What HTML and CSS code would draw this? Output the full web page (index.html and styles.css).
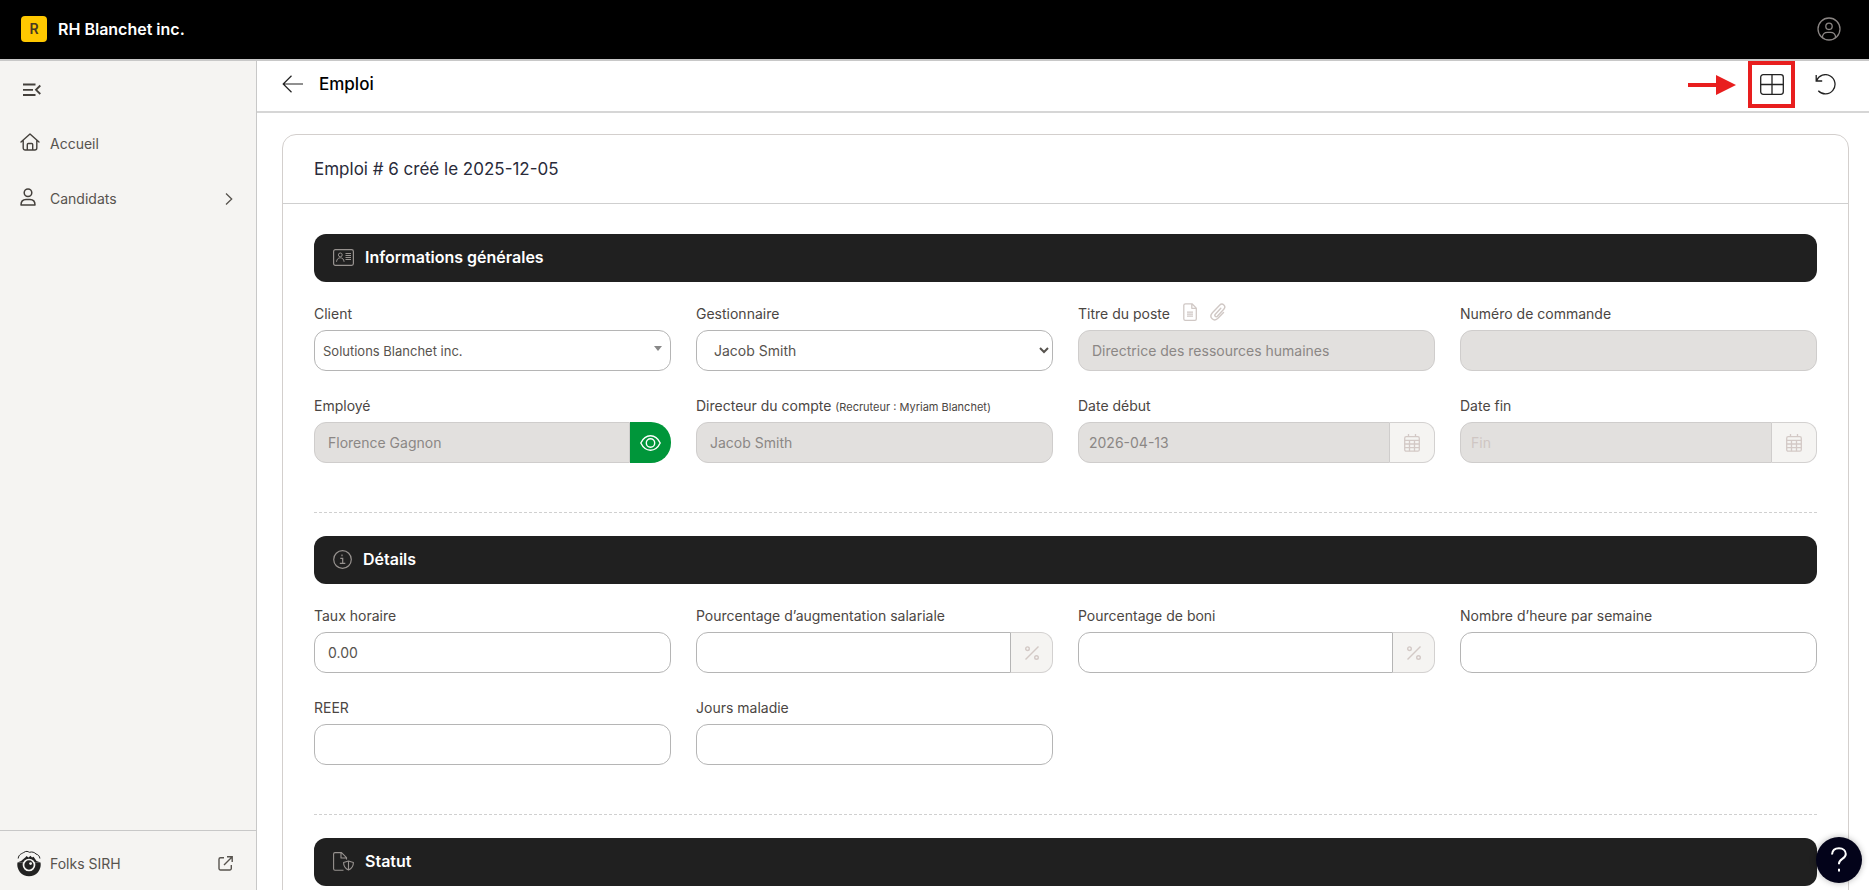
FILE: index.html
```html
<!DOCTYPE html>
<html lang="fr">
<head>
<meta charset="utf-8">
<meta name="viewport" content="width=device-width, initial-scale=1">
<title>RH Blanchet inc. – Emploi</title>
<link rel="stylesheet" href="styles.css">
</head>
<body>
<div class="app">
  <header class="topbar">
    <span class="brand-badge">R</span>
    <span class="brand-name">RH Blanchet inc.</span>
    <button class="icon-btn account" type="button" aria-label="Compte">
      <svg width="24" height="24" viewBox="0 0 24 24" fill="none" stroke="currentColor" stroke-width="1.3"><circle cx="12" cy="12" r="11"/><circle cx="12" cy="9.3" r="3.2"/><path d="M5.3 20.4c.3-3 2.500-5 5.200-5h3c2.700 0 4.900 2 5.200 5"/></svg>
    </button>
  </header>

  <nav class="sidebar">
    <button class="icon-btn collapse" type="button" aria-label="Réduire le menu">
      <svg width="18" height="14" viewBox="0 0 18 14" fill="none" stroke="currentColor" stroke-width="1.8"><path d="M0 1.500h12.500M0 6.800h10M0 12h12.500M17.300 2.500 13 6.800l4.300 4.200"/></svg>
    </button>
    <a class="nav-item" href="#">
      <svg class="nav-icon" width="20" height="18" viewBox="0 0 20 18" fill="none" stroke="currentColor" stroke-width="1.400" stroke-linecap="round" stroke-linejoin="round"><path d="M1 9 10 1l9 8M3.200 7.300V15a2 2 0 0 0 2 2h9.600a2 2 0 0 0 2-2V7.300M7.300 17v-5.500a1 1 0 0 1 1-1h3.400a1 1 0 0 1 1 1V17"/></svg>
      <span>Accueil</span>
    </a>
    <a class="nav-item" href="#">
      <svg class="nav-icon" width="16" height="18" viewBox="0 0 16 18" fill="none" stroke="currentColor" stroke-width="1.500" stroke-linejoin="round"><circle cx="8" cy="4.700" r="3.800"/><path d="M1 17.100c0-3.400 2-5.600 5-5.600h4c3 0 5 2.200 5 5.600z"/></svg>
      <span>Candidats</span>
      <svg class="nav-end" width="8" height="14" viewBox="0 0 8 14" fill="none" stroke="currentColor" stroke-width="1.300"><path d="m1 1.500 5.700 5.500L1 12.500"/></svg>
    </a>
    <a class="nav-foot" href="#">
      <svg class="folks" width="26" height="27" viewBox="0 0 26 27"><path d="M2.200 8.500C2.600 4 6.500 3.500 8 2.300c2.500-1.600 3.800-.8 5.500 0 2.500-.8 5 0 6.500 1.700 2.300.7 3.700 2.200 3.900 4.500" fill="none" stroke="#222"/><path d="M1.500 12.500 5 11l4.500-3.800L10.500 6l2 1.500L14.500 5.800l1.500 1.700 1.500-.8L20.500 11l4 1.500z" fill="#222"/><path d="M1.500 12.500a11.700 11.700 0 1 0 23 0z" fill="#222"/><circle cx="13" cy="15" r="5.500" fill="#222" stroke="#f5f4f2" stroke-width="1.700"/><circle cx="14.600" cy="13.600" r="1.400" fill="#f5f4f2"/></svg>
      <span>Folks SIRH</span>
      <svg class="nav-end" width="15" height="15" viewBox="0 0 15 15" fill="none" stroke="currentColor" stroke-width="1.400"><path d="M6 1.700H2.500A1.500 1.500 0 0 0 1 3.200v9.300A1.500 1.500 0 0 0 2.500 14h9.300a1.500 1.500 0 0 0 1.500-1.500V9M9 .8h5.200V6M14 1 6 9"/></svg>
    </a>
  </nav>

  <div class="page">
    <div class="toolbar">
      <button class="icon-btn" type="button" aria-label="Retour">
        <svg width="21" height="18" viewBox="0 0 21 18" fill="none" stroke="currentColor" stroke-width="1.200"><path d="M9.500.8 1.200 9l8.300 8.200M1.200 9H21"/></svg>
      </button>
      <h1 class="page-title">Emploi</h1>
      <div class="toolbar-actions">
        <button class="icon-btn highlighted" type="button" aria-label="Disposition">
          <svg width="24" height="21" viewBox="0 0 24 21" fill="none" stroke="currentColor" stroke-width="1.300"><rect x=".7" y=".7" width="22.600" height="19.600" rx="2.500"/><path d="M.7 10.500h22.600M12 .7v19.600"/></svg>
          <svg class="pointer" width="48" height="20" viewBox="0 0 48 20" fill="#e81e1e" aria-hidden="true"><path d="M0 8h28V0l20 10-20 10v-8H0z"/></svg>
        </button>
        <button class="icon-btn" type="button" aria-label="Annuler">
          <svg width="21" height="21" viewBox="0 0 21 21" fill="none" stroke="currentColor" stroke-width="1.300"><path d="M1.200 1v6h6M1.500 6.700A9.600 9.600 0 1 1 3.300 16.700"/></svg>
        </button>
      </div>
    </div>

    <main class="content">
      <form class="card">
        <h2 class="card-head">Emploi # 6 créé le 2025-12-05</h2>
        <div class="card-body">

          <section class="section">
            <h3 class="section-bar">
              <svg width="21" height="17" viewBox="0 0 21 17" fill="none" stroke="currentColor"><rect x=".6" y=".6" width="19.800" height="15.800" rx="1.800" stroke-width="1.200"/><circle cx="7.300" cy="5.900" r="1.900"/><path d="M3.500 12.800c.3-2.700 1.800-4 3.800-4s3.500 1.300 3.800 4M12.500 4.500h5.500M12.500 6.500h5.500M12.500 8.500h5.500M12.500 10.500h5.500"/></svg>
              Informations générales
            </h3>
            <div class="fields">
              <div class="field">
                <label for="client">Client</label>
                <div class="picker"><select id="client"><option>Solutions Blanchet inc.</option></select></div>
              </div>
              <div class="field">
                <label for="manager">Gestionnaire</label>
                <select class="control native" id="manager"><option>Jacob Smith</option></select>
              </div>
              <div class="field">
                <div class="label-row">
                  <label for="job">Titre du poste</label>
                  <svg width="14" height="18" viewBox="0 0 14 18" fill="none" stroke="currentColor" stroke-width="1.300" stroke-linejoin="round"><path d="M2.500.8H9l4.300 4.300V16a1.300 1.300 0 0 1-1.300 1.300H2.200A1.400 1.400 0 0 1 .8 16V2.200C.8 1.400 1.500.8 2.500.8zM8.800.8v4.500h4.500M4 9.200h6M4 11.200h6M4 13.200h6"/></svg>
                  <svg width="16" height="18" viewBox="0 0 16 18" fill="none" stroke="currentColor" stroke-width="1.400" stroke-linecap="round"><path d="M10.800 5.300 5.300 11.300c-1.300 1.500.6 3.300 2 1.900l6.500-7c2.800-3.100-1.300-7-4.200-4L2.400 9.800c-4.100 4.500 1.600 9.800 5.800 5.300l5.300-5.700"/></svg>
                </div>
                <input class="control" id="job" value="Directrice des ressources humaines" disabled>
              </div>
              <div class="field">
                <label for="order">Numéro de commande</label>
                <input class="control" id="order" disabled>
              </div>
              <div class="field">
                <label for="employee">Employé</label>
                <div class="group">
                  <input class="control" id="employee" value="Florence Gagnon" disabled>
                  <button class="view-btn" type="button" aria-label="Voir">
                    <svg width="21" height="16" viewBox="0 0 21 16" fill="none" stroke="currentColor" stroke-width="1.400"><path d="M.8 8C3 3.500 6.500.8 10.500.8S18 3.500 20.200 8c-2.200 4.500-5.700 7.200-9.700 7.200S3 12.500.8 8z"/><circle cx="10.500" cy="8" r="4.200"/></svg>
                  </button>
                </div>
              </div>
              <div class="field">
                <label for="director">Directeur du compte <small>(Recruteur : Myriam Blanchet)</small></label>
                <input class="control" id="director" value="Jacob Smith" disabled>
              </div>
              <div class="field">
                <label for="start">Date début</label>
                <div class="group date">
                  <input class="control" id="start" value="2026-04-13" disabled>
                  <span class="addon"><svg width="16" height="18" viewBox="0 0 16 18" fill="none" stroke="currentColor" stroke-width="1.300"><rect x=".7" y="2.700" width="14.600" height="14.500" rx="1.500"/><path d="M4.500 0v3M11.500 0v3M.7 6.300h14.600M.7 10h14.600M.7 13.600h14.600M5.500 6.300v11M10.500 6.300v11"/></svg></span>
                </div>
              </div>
              <div class="field">
                <label for="end">Date fin</label>
                <div class="group date">
                  <input class="control" id="end" placeholder="Fin" disabled>
                  <span class="addon"><svg width="16" height="18" viewBox="0 0 16 18" fill="none" stroke="currentColor" stroke-width="1.300"><rect x=".7" y="2.700" width="14.600" height="14.500" rx="1.500"/><path d="M4.500 0v3M11.500 0v3M.7 6.300h14.600M.7 10h14.600M.7 13.600h14.600M5.500 6.300v11M10.500 6.300v11"/></svg></span>
                </div>
              </div>
            </div>
          </section>

          <section class="section">
            <h3 class="section-bar">
              <svg width="19" height="19" viewBox="0 0 19 19" fill="none" stroke="currentColor" stroke-width="1.200"><circle cx="9.500" cy="9.500" r="8.800"/><path d="M7.300 8.300h2.400v5M6.800 13.300h5.500M9 4.500v1.800"/></svg>
              Détails
            </h3>
            <div class="fields">
              <div class="field">
                <label for="rate">Taux horaire</label>
                <input class="control" id="rate" value="0.00">
              </div>
              <div class="field">
                <label for="raise">Pourcentage d’augmentation salariale</label>
                <div class="group percent">
                  <input class="control" id="raise">
                  <span class="addon"><svg width="14" height="14" viewBox="0 0 14 14" fill="none" stroke="currentColor" stroke-width="1.400"><path d="M13.500.5.500 13.500"/><circle cx="2.500" cy="2.700" r="1.800"/><circle cx="11.500" cy="11.500" r="1.800"/></svg></span>
                </div>
              </div>
              <div class="field">
                <label for="bonus">Pourcentage de boni</label>
                <div class="group percent">
                  <input class="control" id="bonus">
                  <span class="addon"><svg width="14" height="14" viewBox="0 0 14 14" fill="none" stroke="currentColor" stroke-width="1.400"><path d="M13.500.5.500 13.500"/><circle cx="2.500" cy="2.700" r="1.800"/><circle cx="11.500" cy="11.500" r="1.800"/></svg></span>
                </div>
              </div>
              <div class="field">
                <label for="hours">Nombre d’heure par semaine</label>
                <input class="control" id="hours">
              </div>
              <div class="field">
                <label for="reer">REER</label>
                <input class="control" id="reer">
              </div>
              <div class="field">
                <label for="sick">Jours maladie</label>
                <input class="control" id="sick">
              </div>
            </div>
          </section>

          <section class="section">
            <h3 class="section-bar">
              <svg width="21" height="19" viewBox="0 0 21 19" fill="none" stroke="currentColor" stroke-width="1.100" stroke-linejoin="round"><path d="M10.500 18.300H2A1.500 1.500 0 0 1 .6 16.800V2.100A1.500 1.500 0 0 1 2 .6h6.500l5 5v2M8 .6v5.400h5.500M15.500 9l4.900 1.600c0 3.500-1.500 6-4.900 7.500-3.400-1.500-4.900-4-4.900-7.500zM15.500 9v9"/></svg>
              Statut
            </h3>
          </section>

        </div>
      </form>
    </main>
  </div>

  <button class="help" type="button" aria-label="Aide">
    <svg width="16" height="26" viewBox="0 0 16 26" fill="none" stroke="currentColor" stroke-width="2"><path d="M1 7.500C1.300 3.500 4 1.300 8 1.300c4.200 0 6.800 2.400 6.800 5.700 0 5-6.800 4.800-6.800 9.500v.8M8 21.800v2.700"/></svg>
  </button>
</div>
</body>
</html>
```
FILE: styles.css
```css
* {
  box-sizing: border-box;
}

body {
  margin: 0;
  font-family: Inter, "Liberation Sans", sans-serif;
  font-size: 14px;
  color: #4b4643;
  background: #fff;
}

h1, h2, h3 {
  margin: 0;
}

svg {
  display: block;
  flex: none;
}

.app {
  display: grid;
  grid-template-columns: 257px minmax(0, 1fr);
  grid-template-rows: 61px minmax(0, 1fr);
  height: 100vh;
  overflow: hidden;
}

.icon-btn {
  display: flex;
  align-items: center;
  justify-content: center;
  padding: 0;
  border: 0;
  background: none;
  color: #222;
}

/* Top bar */
.topbar {
  grid-column: 1 / -1;
  display: flex;
  align-items: center;
  padding: 0 28px 2px 21px;
  background: #000;
  border-bottom: 2px solid #c8c8c8;
}

.brand-badge {
  width: 26px;
  height: 26px;
  border-radius: 4px;
  background: #ffc800;
  color: #4a3a20;
  font-weight: 600;
  line-height: 26px;
  text-align: center;
}

.brand-name {
  margin-left: 11px;
  color: #fff;
  font-size: 16px;
  font-weight: 600;
}

.account {
  margin-left: auto;
  color: #8a8583;
}

/* Sidebar */
.sidebar {
  display: flex;
  flex-direction: column;
  background: #f5f4f2;
  border-right: 1px solid #c8c8c8;
}

.collapse {
  align-self: flex-start;
  margin: 22px 0 19px 23px;
  color: #44403c;
}

.nav-item,
.nav-foot {
  display: flex;
  align-items: center;
  padding: 0 23px 0 50px;
  color: #57534e;
  text-decoration: none;
}

.nav-item {
  position: relative;
  height: 55px;
}

.nav-icon,
.folks {
  position: absolute;
  left: 20px;
}

.nav-icon {
  top: 17px;
  color: #44403c;
}

.nav-end {
  margin-left: auto;
}

.nav-foot {
  position: relative;
  height: 60px;
  margin-top: auto;
  padding-top: 5px;
  border-top: 1px solid #c8c8c8;
}

.folks {
  left: 16px;
}

/* Page */
.page {
  display: flex;
  flex-direction: column;
  min-height: 0;
}

.toolbar {
  display: flex;
  flex: none;
  align-items: center;
  height: 52px;
  padding: 0 33px 4px 25px;
  border-bottom: 2px solid #d6d6d6;
}

.page-title {
  margin-left: 16px;
  color: #000;
  font-size: 17px;
  font-weight: 500;
}

.toolbar-actions {
  display: flex;
  align-items: center;
  gap: 20px;
  margin-left: auto;
}

.highlighted {
  position: relative;
  width: 47px;
  height: 47px;
  border: 4px solid #e81e1e;
}

.pointer {
  position: absolute;
  top: 10px;
  right: 55px;
}

.content {
  flex: 1;
  min-height: 0;
  padding: 21px 20px 24px 25px;
  overflow: hidden;
}

.card {
  border: 1px solid #d3cfcd;
  border-radius: 14px;
}

.card-head {
  padding: 22px 31px;
  border-bottom: 1px solid #cfcfcf;
  color: #292b3a;
  font-size: 17px;
  font-weight: 400;
  line-height: 24px;
}

.card-body {
  padding: 30px 31px;
}

.section + .section {
  margin-top: 49px;
  padding-top: 23px;
  border-top: 1px dashed #d0d0d0;
}

.section-bar {
  display: flex;
  align-items: center;
  gap: 11px;
  height: 48px;
  padding: 0 19px 2px;
  border-radius: 12px;
  background: #202020;
  color: #fff;
  font-size: 16px;
  font-weight: 600;
}

.section-bar svg {
  color: #97928f;
}

.fields {
  display: grid;
  grid-template-columns: repeat(4, minmax(0, 1fr));
  gap: 25px;
  margin-top: 22px;
}

.field label {
  display: block;
  height: 20px;
  line-height: 20px;
  white-space: nowrap;
}

.field label small {
  font-size: 11px;
}

.field > label,
.label-row {
  margin-bottom: 6px;
}

.label-row {
  display: flex;
  gap: 13px;
}

.label-row svg {
  margin-top: -1px;
  color: #d0c8c5;
}

.control,
.picker select {
  display: block;
  width: 100%;
  height: 41px;
  margin: 0;
  padding: 0 13px;
  border: 1px solid #b5b5b5;
  border-radius: 12px;
  background: #fff;
  color: #57534e;
  font: inherit;
}

.control:disabled {
  border-color: #cfcdcc;
  background: #e2e0de;
  color: #8b8785;
  opacity: 1;
}

.control::placeholder {
  color: #cfc6c3;
}

.native {
  padding: 0 0 0 13px;
}

.picker {
  position: relative;
}

.picker select {
  padding: 0 30px 0 8px;
  appearance: none;
  font-size: 13px;
}

.picker::after {
  content: "";
  position: absolute;
  top: 16px;
  right: 9px;
  border: 4px solid transparent;
  border-top: 5px solid #888;
  border-bottom: 0;
}

.group {
  display: flex;
}

.group .control {
  flex: 1;
  min-width: 0;
  border-radius: 12px 0 0 12px;
}

.date .control {
  padding-left: 10px;
}

.addon {
  display: flex;
  align-items: center;
  justify-content: center;
  width: 45px;
  border: 1px solid #d3d1d0;
  border-left: 0;
  border-radius: 0 12px 12px 0;
  background: #f5f4f2;
  color: #d3c9c6;
}

.percent .addon {
  width: 42px;
}

.view-btn {
  display: flex;
  align-items: center;
  justify-content: center;
  width: 41px;
  padding: 0;
  border: 0;
  border-radius: 0 20px 20px 0;
  background: #00963a;
  color: #fff;
}

/* Floating help */
.help {
  position: fixed;
  right: 7px;
  bottom: 7px;
  display: flex;
  align-items: center;
  justify-content: center;
  width: 46px;
  height: 46px;
  padding: 0;
  border: 0;
  border-radius: 50%;
  background: #03031a;
  color: #fff;
  box-shadow: 0 0 6px rgba(0, 0, 0, 0.3);
}
```
